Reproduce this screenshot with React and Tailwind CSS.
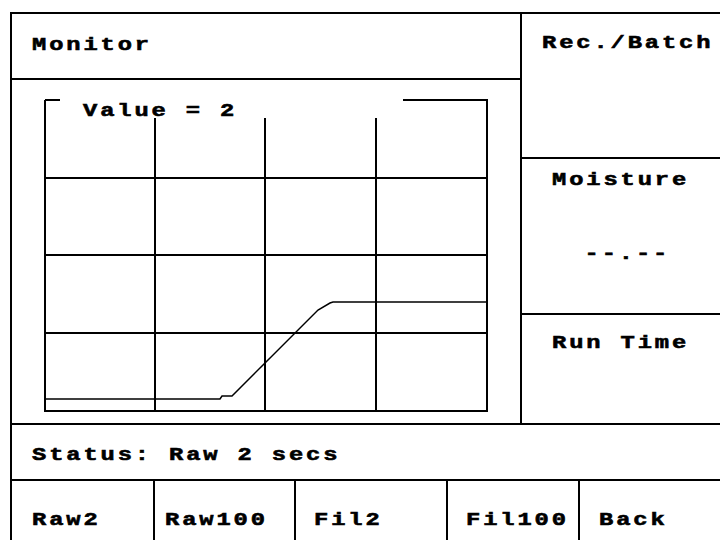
import React from "react";

const font = { fontFamily: '"Liberation Mono", "Courier New", monospace' };
const txt =
  "text-[19px] font-bold tracking-[2.3px] leading-none text-black whitespace-pre scale-x-125 origin-left [-webkit-text-stroke:0.6px_black]";

function Chart() {
  const vx = [143, 253, 364];
  const hy = [98, 175, 253];
  return (
    <div className="relative flex-1">
      <svg width="508" height="341" className="block" shapeRendering="crispEdges">
        <g stroke="#000" strokeWidth="2" fill="none">
          <path d="M33 20 H48" />
          <path d="M391 20 H475 V331 H33 V20" />
          {vx.map((x) => (
            <path key={x} d={`M${x} 38 V331`} />
          ))}
          {hy.map((y) => (
            <path key={y} d={`M33 ${y} H475`} />
          ))}
        </g>
        <path
          d="M33 319 H208 L210 316 H220 L306 230 L318 223 L321 222 H475"
          stroke="#000"
          strokeWidth="1.5"
          fill="none"
          shapeRendering="auto"
        />
      </svg>
      <div className={`absolute left-[71px] top-[22px] ${txt}`} style={font}>
        Value = 2
      </div>
    </div>
  );
}

export default function App() {
  return (
    <div className="w-[720px] h-[540px] overflow-hidden bg-white pt-[12px] pl-[10px]" style={font}>
      <div className="w-[720px] border-t-2 border-l-2 border-black flex flex-col">
        <div className="flex h-[409px]">
          <div className="w-[508px] flex flex-col">
            <div className="h-[66px] border-b-2 border-black pl-[20px] pt-[22px]">
              <div className={txt}>Monitor</div>
            </div>
            <Chart />
          </div>
          <div className="flex-1 border-l-2 border-black flex flex-col">
            <div className="h-[145px] border-b-2 border-black pl-[20px] pt-[20px]">
              <div className={txt}>Rec./Batch</div>
            </div>
            <div className="h-[156px] border-b-2 border-black pl-[30px] pt-[12px]">
              <div className={txt}>Moisture</div>
              <div className={`${txt} pl-[26px] mt-[55px]`}>--.--</div>
            </div>
            <div className="flex-1 pl-[30px] pt-[19px]">
              <div className={txt}>Run Time</div>
            </div>
          </div>
        </div>
        <div className="h-[58px] border-t-2 border-b-2 border-black pl-[20px] pt-[21px]">
          <div className={txt}>Status: Raw 2 secs</div>
        </div>
        <div className="flex h-[70px]">
          <div className="w-[141px] pl-[20px] pt-[30px]">
            <div className={txt}>Raw2</div>
          </div>
          <div className="w-[141px] border-l-2 border-black pl-[10px] pt-[30px]">
            <div className={txt}>Raw100</div>
          </div>
          <div className="w-[152px] border-l-2 border-black pl-[18px] pt-[30px]">
            <div className={txt}>Fil2</div>
          </div>
          <div className="w-[132px] border-l-2 border-black pl-[18px] pt-[30px]">
            <div className={txt}>Fil100</div>
          </div>
          <div className="flex-1 border-l-2 border-black pl-[19px] pt-[30px]">
            <div className={txt}>Back</div>
          </div>
        </div>
      </div>
    </div>
  );
}
